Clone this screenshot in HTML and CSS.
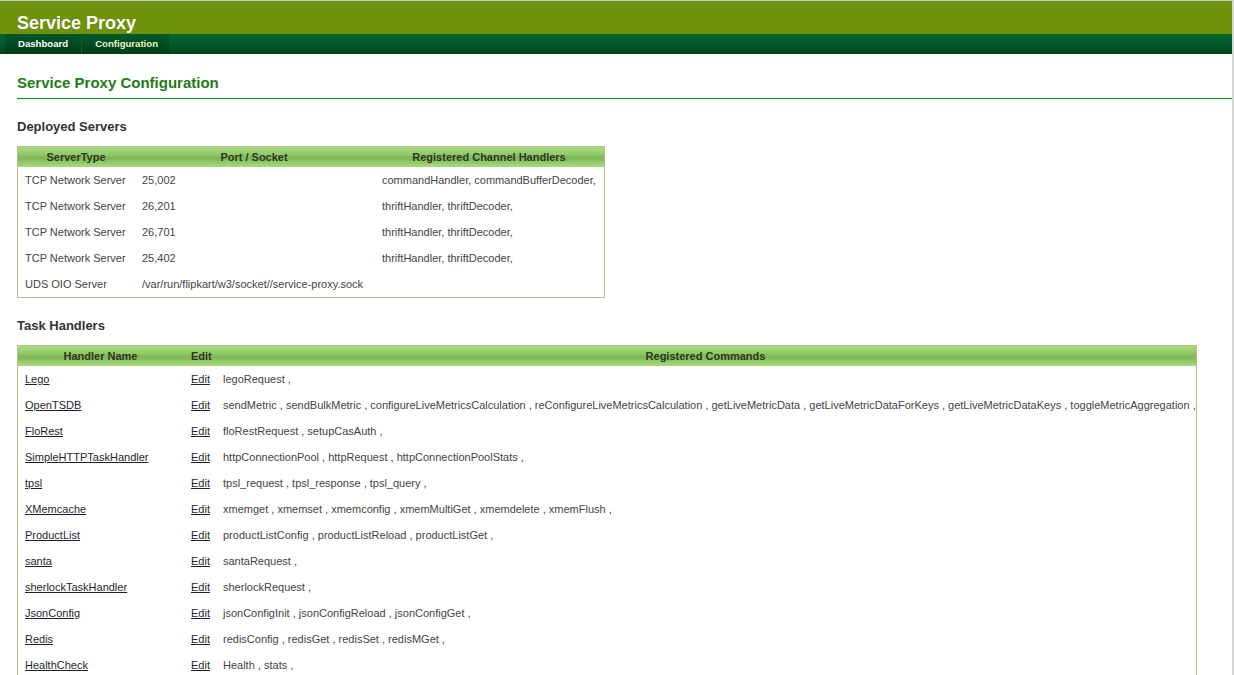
FILE: index.html
```html
<!DOCTYPE html>
<html>
<head>
<meta charset="utf-8">
<title>Service Proxy</title>
<link rel="stylesheet" href="styles.css">
</head>
<body>
<div class="page">
  <div class="header">
    <div class="brand">Service Proxy</div>
  </div>
  <div class="nav">
    <a class="tab tab-first" href="#">Dashboard</a>
    <a class="tab tab-active" href="#">Configuration</a>
  </div>
  <div class="content">
    <h1 class="page-title">Service Proxy Configuration</h1>
    <h2 class="section-title">Deployed Servers</h2>
    <table class="grid grid-servers">
      <colgroup><col class="c-type"><col class="c-port"><col class="c-handlers"></colgroup>
      <thead>
        <tr><th>ServerType</th><th>Port / Socket</th><th>Registered Channel Handlers</th></tr>
      </thead>
      <tbody>
        <tr><td>TCP Network Server</td><td>25,002</td><td>commandHandler, commandBufferDecoder,</td></tr>
        <tr><td>TCP Network Server</td><td>26,201</td><td>thriftHandler, thriftDecoder,</td></tr>
        <tr><td>TCP Network Server</td><td>26,701</td><td>thriftHandler, thriftDecoder,</td></tr>
        <tr><td>TCP Network Server</td><td>25,402</td><td>thriftHandler, thriftDecoder,</td></tr>
        <tr><td>UDS OIO Server</td><td>/var/run/flipkart/w3/socket//service-proxy.sock</td><td></td></tr>
      </tbody>
    </table>
    <h2 class="section-title">Task Handlers</h2>
    <table class="grid grid-tasks">
      <colgroup><col class="c-name"><col class="c-edit"><col class="c-cmds"></colgroup>
      <thead>
        <tr><th>Handler Name</th><th>Edit</th><th>Registered Commands</th></tr>
      </thead>
      <tbody>
        <tr><td><a href="#">Lego</a></td><td><a href="#">Edit</a></td><td>legoRequest ,</td></tr>
        <tr><td><a href="#">OpenTSDB</a></td><td><a href="#">Edit</a></td><td>sendMetric , sendBulkMetric , configureLiveMetricsCalculation , reConfigureLiveMetricsCalculation , getLiveMetricData , getLiveMetricDataForKeys , getLiveMetricDataKeys , toggleMetricAggregation ,</td></tr>
        <tr><td><a href="#">FloRest</a></td><td><a href="#">Edit</a></td><td>floRestRequest , setupCasAuth ,</td></tr>
        <tr><td><a href="#">SimpleHTTPTaskHandler</a></td><td><a href="#">Edit</a></td><td>httpConnectionPool , httpRequest , httpConnectionPoolStats ,</td></tr>
        <tr><td><a href="#">tpsl</a></td><td><a href="#">Edit</a></td><td>tpsl_request , tpsl_response , tpsl_query ,</td></tr>
        <tr><td><a href="#">XMemcache</a></td><td><a href="#">Edit</a></td><td>xmemget , xmemset , xmemconfig , xmemMultiGet , xmemdelete , xmemFlush ,</td></tr>
        <tr><td><a href="#">ProductList</a></td><td><a href="#">Edit</a></td><td>productListConfig , productListReload , productListGet ,</td></tr>
        <tr><td><a href="#">santa</a></td><td><a href="#">Edit</a></td><td>santaRequest ,</td></tr>
        <tr><td><a href="#">sherlockTaskHandler</a></td><td><a href="#">Edit</a></td><td>sherlockRequest ,</td></tr>
        <tr><td><a href="#">JsonConfig</a></td><td><a href="#">Edit</a></td><td>jsonConfigInit , jsonConfigReload , jsonConfigGet ,</td></tr>
        <tr><td><a href="#">Redis</a></td><td><a href="#">Edit</a></td><td>redisConfig , redisGet , redisSet , redisMGet ,</td></tr>
        <tr><td><a href="#">HealthCheck</a></td><td><a href="#">Edit</a></td><td>Health , stats ,</td></tr>
      </tbody>
    </table>
  </div>
</div>
</body>
</html>
```
FILE: styles.css
```css
html, body {
  margin: 0;
  padding: 0;
  background: #ffffff;
}
body {
  font-family: "Liberation Sans", Arial, sans-serif;
  font-size: 11px;
  color: #444444;
}
.page {
  width: 1232px;
  min-height: 674px;
  border-top: 1px solid #c4c4c4;
  border-right: 2px solid #d6d6d6;
  overflow: hidden;
}
.header {
  height: 22px;
  padding: 11px 0 0 17px;
  background: #6f920d;
}
.brand {
  font-size: 18px;
  line-height: 22px;
  font-weight: bold;
  color: #ffffff;
  text-shadow: 0 0 1px rgba(0, 0, 0, 0.25);
}
.nav {
  display: flex;
  height: 20px;
  padding-left: 5px;
  background: linear-gradient(#00652f, #005a29 50%, #00461b);
}
.tab {
  display: block;
  padding: 0 13px;
  line-height: 20px;
  font-size: 9.6px;
  font-weight: bold;
  color: #ffffff;
  text-decoration: none;
  background: linear-gradient(#00552a, #004a22 50%, #003a14);
}
.tab-first {
  border-right: 1px solid #0b5e2a;
}
.tab-active {
  padding: 0 11px 0 13px;
  color: #eef0c6;
  background: linear-gradient(#005a2b, #004c22 50%, #003b15);
}
.content {
  padding-left: 17px;
}
.page-title {
  margin: 20px 0 0 0;
  padding-bottom: 6px;
  font-size: 15px;
  line-height: 18px;
  font-weight: bold;
  color: #1b7d12;
  border-bottom: 1px solid #0d8a0d;
}
.section-title {
  margin: 20px 0 11px 0;
  font-size: 13px;
  line-height: 16px;
  font-weight: bold;
  color: #333333;
}
.grid {
  border-collapse: separate;
  border-spacing: 0;
  table-layout: fixed;
  border: 1px solid #b7bf8d;
}
.grid th {
  height: 20px;
  padding: 0 8px;
  font-size: 11px;
  font-weight: bold;
  color: #2d3622;
  text-align: center;
  background: linear-gradient(#a8da80, #97cf6d 30%, #7db653 55%, #8fc867 75%, #a7db7f);
}
.grid td {
  height: 26px;
  padding: 0 8px;
  vertical-align: middle;
  white-space: nowrap;
  color: #444444;
}
.grid td:first-child {
  padding-left: 7px;
}
.grid a {
  color: #1f1f2e;
  text-decoration: underline;
}
.grid-servers {
  width: 588px;
}
.c-type { width: 116px; }
.c-port { width: 240px; }
.c-handlers { width: 230px; }
.grid-tasks {
  width: 1180px;
}
.c-name { width: 165px; }
.c-edit { width: 32px; }
.c-cmds { width: 981px; }
```
